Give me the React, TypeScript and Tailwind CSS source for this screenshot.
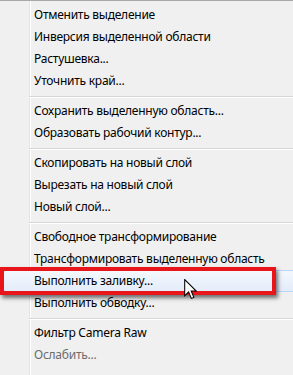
const groups: { label: string; disabled?: boolean; active?: boolean }[][] = [
  [
    { label: 'Отменить выделение' },
    { label: 'Инверсия выделенной области' },
    { label: 'Растушевка...' },
    { label: 'Уточнить край...' },
  ],
  [
    { label: 'Сохранить выделенную область...' },
    { label: 'Образовать рабочий контур...' },
  ],
  [
    { label: 'Скопировать на новый слой' },
    { label: 'Вырезать на новый слой' },
    { label: 'Новый слой...' },
  ],
  [
    { label: 'Свободное трансформирование' },
    { label: 'Трансформировать выделенную область' },
    { label: 'Выполнить заливку...', active: true },
    { label: 'Выполнить обводку...' },
  ],
  [
    { label: 'Фильтр Camera Raw' },
    { label: 'Ослабить...', disabled: true },
  ],
];

function Cursor() {
  return (
    <svg width="14" height="21" viewBox="0 0 13 20" className="absolute left-[184px] top-[278px]">
      <path
        d="M0.5 0.5 L0.5 16 L4.2 12.4 L6.8 18.5 L9.2 17.5 L6.7 11.5 L11.5 11.5 Z"
        fill="#ffffff"
        stroke="#000000"
        strokeWidth="1"
        strokeLinejoin="miter"
      />
    </svg>
  );
}

export default function App() {
  return (
    <div
      className="relative w-[293px] h-[375px] overflow-hidden bg-[#f0f0f0] border-t border-[#a7a7a7] text-[12px] tracking-[-0.25px] text-[#000]"
      style={{ fontFamily: '"Noto Sans", "Open Sans", sans-serif' }}
    >
      {/* left gutter line */}
      <div className="absolute left-[29px] top-0 bottom-0 w-[2px] border-l border-[#e2e3e3]">
        <div className="h-full w-px bg-white" />
      </div>

      <div className="relative flex flex-col pt-[3px]">
        {groups.map((group, gi) => (
          <div key={gi} className="flex flex-col">
            {gi > 0 && (
              <div className="h-2 pl-[29px] pt-1">
                <div className="h-px bg-[#d7d7d7]" />
                <div className="h-px bg-white" />
              </div>
            )}
            {group.map((item) =>
              item.active ? (
                <div key={item.label} className="h-[22px] pl-[3px] -mr-2">
                  <div className="h-full flex items-center pl-[30px] rounded-[3px] border border-[#b8d6fb] bg-gradient-to-b from-[#f4f8fd] to-[#e3ecf9]">
                    {item.label}
                  </div>
                </div>
              ) : (
                <div
                  key={item.label}
                  className={`h-[22px] flex items-center pl-[34px] whitespace-nowrap ${item.disabled ? 'text-[#6d6d6d]' : ''}`}
                >
                  {item.label}
                </div>
              )
            )}
          </div>
        ))}
      </div>

      {/* red annotation frame */}
      <div className="absolute left-0 top-[266px] w-[276px] h-[28px] border-[4px] border-[#e8161b] shadow-[2px_3px_4px_rgba(0,0,0,0.55)]" />
      <Cursor />
    </div>
  );
}
